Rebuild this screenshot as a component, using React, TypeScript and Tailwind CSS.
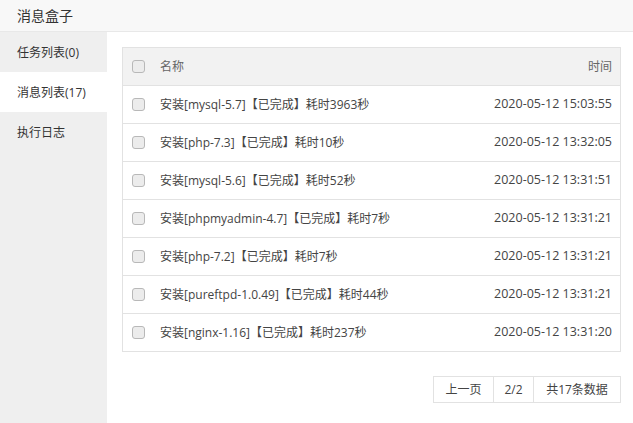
import React from "react";

const rows = [
  ["安装[mysql-5.7]【已完成】耗时3963秒", "2020-05-12 15:03:55"],
  ["安装[php-7.3]【已完成】耗时10秒", "2020-05-12 13:32:05"],
  ["安装[mysql-5.6]【已完成】耗时52秒", "2020-05-12 13:31:51"],
  ["安装[phpmyadmin-4.7]【已完成】耗时7秒", "2020-05-12 13:31:21"],
  ["安装[php-7.2]【已完成】耗时7秒", "2020-05-12 13:31:21"],
  ["安装[pureftpd-1.0.49]【已完成】耗时44秒", "2020-05-12 13:31:21"],
  ["安装[nginx-1.16]【已完成】耗时237秒", "2020-05-12 13:31:20"],
];

function Box() {
  return <span className="inline-block w-[13px] h-[13px] rounded-[3px] border border-[#b8b8b8] bg-[#ececec]" />;
}

export default function App() {
  return (
    <div
      className="w-[633px] h-[423px] bg-white flex flex-col text-[#333] overflow-hidden"
      style={{ fontFamily: '"Open Sans", "Noto Sans CJK SC", sans-serif' }}
    >
      <div className="h-[32px] shrink-0 bg-[#f8f8f8] border-b border-[#e8e8e8] pl-[17px] flex items-center text-[14px] text-[#333]">
        消息盒子
      </div>
      <div className="flex flex-1">
        <div className="w-[107px] shrink-0 bg-[#efefef] text-[12px]">
          <div className="h-[40px] pl-[17px] pt-[2px] flex items-center">任务列表(0)</div>
          <div className="h-[40px] pl-[17px] pt-[2px] flex items-center bg-white">消息列表(17)</div>
          <div className="h-[40px] pl-[17px] pt-[2px] flex items-center">执行日志</div>
        </div>
        <div className="flex-1 pl-[15px] pr-[12px] pt-[15px] text-[12px]">
          <div className="border border-[#e2e2e2]">
            <div className="h-[37px] bg-[#f2f2f2] flex items-center pl-[9px] pr-[8px] text-[#666]">
              <Box />
              <span className="ml-[15px] flex-1">名称</span>
              <span>时间</span>
            </div>
            {rows.map(([n, t], i) => (
              <div key={i} className="h-[38px] border-t border-[#e2e2e2] flex items-center pl-[9px] pr-[8px] text-[#444]">
                <Box />
                <span className="ml-[15px] flex-1">{n}</span>
                <span className="text-[12.5px]">{t}</span>
              </div>
            ))}
          </div>
          <div className="flex justify-end mt-[24px]">
            <div className="flex border border-[#e2e2e2] h-[27px] text-[#444]">
              <div className="w-[60px] flex items-center justify-center border-r border-[#e2e2e2]">上一页</div>
              <div className="w-[40px] flex items-center justify-center border-r border-[#e2e2e2]">2/2</div>
              <div className="w-[86px] flex items-center justify-center">共17条数据</div>
            </div>
          </div>
        </div>
      </div>
    </div>
  );
}
